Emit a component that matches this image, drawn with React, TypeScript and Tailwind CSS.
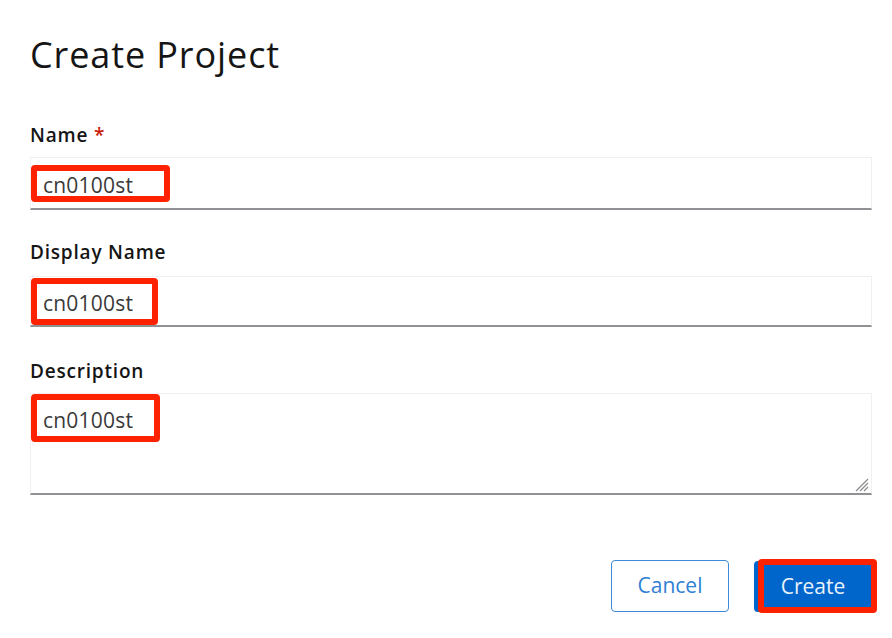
import React from 'react';

const font = { fontFamily: '"Open Sans", "Liberation Sans", sans-serif' };

// Red annotation box around a typed value
const Marked = ({ value, width, height, pt }: { value: string; width: string; height: string; pt: string }) => (
  <span
    className={`inline-block border-[6px] border-[#fe2200] rounded-[4px] pl-[6px] text-[21px] leading-[24px] tracking-[0.2px] text-[#3a3a3a] ${width} ${height} ${pt}`}
  >
    {value}
  </span>
);

const Label = ({ children, className = '' }: { children: React.ReactNode; className?: string }) => (
  <div className={`text-[19px] leading-[24px] font-semibold tracking-[0.8px] text-[#151515] ${className}`}>{children}</div>
);

export default function App() {
  return (
    <div className="w-[892px] h-[638px] bg-white overflow-hidden pl-[30px] pr-[20px] pt-[35px]" style={font}>
      {/* Header */}
      <h1 className="text-[36px] leading-[40px] font-normal tracking-[0.9px] text-[#151515]">Create Project</h1>

      {/* Name */}
      <Label className="mt-[48px]">
        Name <span className="text-[#c9190b]">*</span>
      </Label>
      <div className="mt-[10px] h-[53px] border border-[#f0f0f0] border-b-2 border-b-[#8f9194] flex items-center">
        <Marked value="cn0100st" width="w-[139px]" height="h-[37px]" pt="pt-[2px]" />
      </div>

      {/* Display Name */}
      <Label className="mt-[30px]">Display Name</Label>
      <div className="mt-[12px] h-[51px] border border-[#f0f0f0] border-b-2 border-b-[#8f9194] flex items-center">
        <Marked value="cn0100st" width="w-[127px]" height="h-[47px]" pt="pt-[7px]" />
      </div>

      {/* Description */}
      <Label className="mt-[32px]">Description</Label>
      <div className="mt-[10px] h-[102px] border border-[#f0f0f0] border-b-2 border-b-[#8f9194] relative">
        <Marked value="cn0100st" width="w-[129px]" height="h-[48px]" pt="pt-[8px]" />
        <svg className="absolute right-[2px] bottom-[1px]" width="16" height="16" viewBox="0 0 16 16">
          <path d="M15 3 L3 15 M15 7 L7 15 M15 11 L11 15" stroke="#8a8a8a" strokeWidth="1.2" />
        </svg>
      </div>

      {/* Actions */}
      <div className="mt-[65px] flex justify-end gap-[25px]">
        <button className="w-[118px] h-[52px] rounded-[4px] border border-[#3d8ad9] text-[#2f7fd4] text-[21px]">
          Cancel
        </button>
        <div className="relative">
          <button className="w-[118px] h-[51px] mt-[1px] rounded-[4px] bg-[#0066cc] text-[#eaf2fb] text-[21px]">
            Create
          </button>
          <span className="absolute left-[4px] -right-[5px] -top-[1px] -bottom-[1px] border-[6px] border-[#fe2200] rounded-[4px]" />
        </div>
      </div>
    </div>
  );
}
